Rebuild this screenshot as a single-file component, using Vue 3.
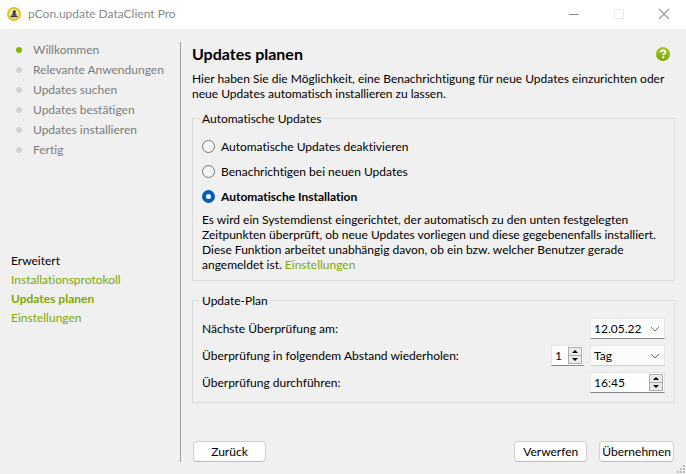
<script setup>
import { ref } from 'vue'

const steps = [
  'Willkommen',
  'Relevante Anwendungen',
  'Updates suchen',
  'Updates bestätigen',
  'Updates installieren',
  'Fertig',
]
const currentStep = 0

const links = ['Installationsprotokoll', 'Updates planen', 'Einstellungen']
const activeLink = 'Updates planen'

const modes = [
  { id: 'off', label: 'Automatische Updates deaktivieren' },
  { id: 'notify', label: 'Benachrichtigen bei neuen Updates' },
  { id: 'auto', label: 'Automatische Installation' },
]
const mode = ref('auto')

const date = ref('12.05.22')
const amount = ref(1)
const unit = ref('Tag')
const time = ref('16:45')

function changeAmount(delta) {
  amount.value = Math.max(1, Number(amount.value) + delta)
}

function changeTime(delta) {
  const [h, m] = time.value.split(':').map(Number)
  time.value = `${String((h + delta + 24) % 24).padStart(2, '0')}:${String(m).padStart(2, '0')}`
}
</script>

<template>
  <div class="window">
    <header class="titlebar">
      <svg class="logo" width="14" height="14" viewBox="0 0 14 14" aria-hidden="true">
        <circle cx="7" cy="7" r="7" fill="#e3c51f" />
        <circle cx="7" cy="7" r="4.9" fill="#ece7b4" />
        <path d="M6.2 3.4h2.6v2L8 6.6l1.6.9v1.2H4.3V7.6h1.9L5.6 6.2z" fill="#34373c" />
        <path d="M3.6 9.6h6.8" stroke="#34373c" stroke-width="1.2" />
      </svg>
      <span class="caption">pCon.update DataClient Pro</span>
      <div class="controls">
        <button type="button" aria-label="Minimieren">
          <svg width="12" height="12" viewBox="0 0 12 12"><path d="M1 6.5h10" stroke="#8c8c8c" /></svg>
        </button>
        <button type="button" aria-label="Maximieren" disabled>
          <svg width="12" height="12" viewBox="0 0 12 12"><rect x="1.5" y="1.5" width="9" height="9" rx="1" fill="none" stroke="#e6e6e6" /></svg>
        </button>
        <button type="button" aria-label="Schließen">
          <svg width="12" height="12" viewBox="0 0 12 12"><path d="M1 1l10 10M11 1L1 11" stroke="#999" stroke-width="1.1" /></svg>
        </button>
      </div>
    </header>

    <div class="body">
      <nav class="sidebar">
        <ol class="steps">
          <li v-for="(step, i) in steps" :key="step" :class="{ current: i === currentStep }">{{ step }}</li>
        </ol>
        <div class="extended">
          <span>Erweitert</span>
          <a v-for="link in links" :key="link" href="#" :class="{ active: link === activeLink }">{{ link }}</a>
        </div>
      </nav>

      <main class="content">
        <div class="heading">
          <h1>Updates planen</h1>
          <button type="button" class="help" aria-label="Hilfe">
            <svg width="14" height="14" viewBox="0 0 14 14">
              <defs>
                <linearGradient id="help-fill" x1="0" y1="0" x2="0" y2="1">
                  <stop offset="0" stop-color="#a5cc22" />
                  <stop offset="1" stop-color="#7aa500" />
                </linearGradient>
              </defs>
              <circle cx="7" cy="7" r="7" fill="url(#help-fill)" />
              <path d="M4.6 5.4C4.6 3.9 5.7 3.3 7 3.3s2.4.7 2.4 1.9c0 1.5-2.2 1.5-2.2 3.1" fill="none" stroke="#fff" stroke-width="1.8" />
              <rect x="6.2" y="9.4" width="2" height="2" fill="#fff" />
            </svg>
          </button>
        </div>
        <p class="intro">
          Hier haben Sie die Möglichkeit, eine Benachrichtigung für neue Updates einzurichten oder
          neue Updates automatisch installieren zu lassen.
        </p>

        <fieldset class="group">
          <legend>Automatische Updates</legend>
          <label v-for="m in modes" :key="m.id" class="mode" :class="{ chosen: mode === m.id }">
            <input v-model="mode" type="radio" name="mode" :value="m.id" />
            <span>{{ m.label }}</span>
          </label>
          <p class="note">
            Es wird ein Systemdienst eingerichtet, der automatisch zu den unten festgelegten
            Zeitpunkten überprüft, ob neue Updates vorliegen und diese gegebenenfalls installiert.
            Diese Funktion arbeitet unabhängig davon, ob ein bzw. welcher Benutzer gerade
            angemeldet ist. <a href="#">Einstellungen</a>
          </p>
        </fieldset>

        <fieldset class="group plan">
          <legend>Update-Plan</legend>
          <div class="row">
            <label for="date">Nächste Überprüfung am:</label>
            <div class="field wide">
              <input id="date" v-model="date" type="text" />
              <button type="button" class="drop" aria-label="Kalender öffnen">
                <svg width="10" height="6" viewBox="0 0 10 6"><path d="M1 1l4 4 4-4" fill="none" stroke="#666" /></svg>
              </button>
            </div>
          </div>
          <div class="row">
            <label for="amount">Überprüfung in folgendem Abstand wiederholen:</label>
            <div class="field narrow">
              <input id="amount" v-model="amount" type="text" />
              <span class="spin">
                <button type="button" aria-label="Mehr" @click="changeAmount(1)">
                  <svg width="6" height="3" viewBox="0 0 6 3"><path d="M0 3l3-3 3 3z" /></svg>
                </button>
                <button type="button" aria-label="Weniger" @click="changeAmount(-1)">
                  <svg width="6" height="3" viewBox="0 0 6 3"><path d="M0 0l3 3 3-3z" /></svg>
                </button>
              </span>
            </div>
            <div class="field wide combo">
              <select v-model="unit" aria-label="Einheit">
                <option>Tag</option>
                <option>Woche</option>
                <option>Monat</option>
              </select>
              <svg class="arrow" width="10" height="6" viewBox="0 0 10 6"><path d="M1 1l4 4 4-4" fill="none" stroke="#666" /></svg>
            </div>
          </div>
          <div class="row">
            <label for="time">Überprüfung durchführen:</label>
            <div class="field wide">
              <input id="time" v-model="time" type="text" />
              <span class="spin">
                <button type="button" aria-label="Später" @click="changeTime(1)">
                  <svg width="6" height="3" viewBox="0 0 6 3"><path d="M0 3l3-3 3 3z" /></svg>
                </button>
                <button type="button" aria-label="Früher" @click="changeTime(-1)">
                  <svg width="6" height="3" viewBox="0 0 6 3"><path d="M0 0l3 3 3-3z" /></svg>
                </button>
              </span>
            </div>
          </div>
        </fieldset>

        <footer class="actions">
          <button type="button">Zurück</button>
          <span class="spacer"></span>
          <button type="button">Verwerfen</button>
          <button type="button">Übernehmen</button>
        </footer>
      </main>
    </div>

    <svg class="grip" width="9" height="9" viewBox="0 0 9 9" aria-hidden="true">
      <path d="M6 0h2v2H6zM3 3h2v2H3zM6 3h2v2H6zM0 6h2v2H0zM3 6h2v2H3zM6 6h2v2H6z" fill="#bdbdbd" />
    </svg>
  </div>
</template>

<style>
body {
  margin: 0;
  background: #f0f0f0;
}
</style>

<style scoped>
.window {
  position: relative;
  display: flex;
  flex-direction: column;
  min-height: 100vh;
  box-sizing: border-box;
  background: #f0f0f0;
  color: #000;
  font: 12px/15px Lato, "Noto Sans", sans-serif;
  font-variant-ligatures: none;
}

button,
input,
select {
  font: inherit;
  color: inherit;
}

button {
  padding: 0;
  border: 0;
  background: none;
}

a {
  color: #7fa800;
  text-decoration: none;
}

.titlebar {
  display: flex;
  align-items: center;
  height: 29px;
  padding: 0 0 2px 7px;
  box-sizing: border-box;
  background: #fff;
  color: #8a8a8a;
}

.caption {
  flex: 1;
  margin-left: 7px;
}

.controls {
  display: flex;
}

.controls button {
  display: flex;
  align-items: center;
  justify-content: center;
  width: 45px;
  height: 27px;
}

.body {
  display: flex;
  flex: 1;
  padding: 13px 11px 12px;
}

.sidebar {
  flex: 0 0 169px;
  border-right: 1px solid #a0a0a0;
}

.steps {
  margin: -2px 0 0;
  padding: 0;
  list-style: none;
  line-height: 20px;
  color: #7c7c7c;
}

.steps li {
  display: flex;
  align-items: center;
  gap: 11px;
  padding-left: 5px;
  white-space: nowrap;
}

.steps li::before {
  content: "";
  width: 6px;
  height: 6px;
  border-radius: 50%;
  background: #d2d2d2;
}

.steps li.current::before {
  background: #86b300;
}

.extended {
  display: flex;
  flex-direction: column;
  margin-top: 91px;
  line-height: 19px;
}

.extended .active {
  font-weight: 700;
}

.content {
  display: flex;
  flex: 1;
  flex-direction: column;
  min-width: 0;
  padding-left: 11px;
}

.heading {
  display: flex;
  align-items: center;
  justify-content: space-between;
  height: 23px;
  padding-right: 5px;
}

h1 {
  margin: 0;
  font-size: 16px;
  line-height: 20px;
}

.help {
  display: flex;
}

.intro {
  margin: 6px 0 0;
}

.group {
  min-width: 0;
  margin: 10px 0 0;
  padding: 8px 9px;
  border: 1px solid #dcdcdc;
}

.group legend {
  margin-left: -2px;
  padding: 0 2px;
}

.mode {
  display: flex;
  align-items: center;
  gap: 6px;
  height: 25px;
}

.mode input {
  appearance: none;
  width: 13px;
  height: 13px;
  margin: 0;
  box-sizing: border-box;
  border: 1px solid #767676;
  border-radius: 50%;
  background: #f5f5f5;
}

.mode input:checked {
  border: 4px solid #005fb8;
  background: #fff;
}

.chosen {
  font-weight: 700;
}

.note {
  margin: 3px 0 0;
}

.plan {
  margin-top: 12px;
  padding-top: 7px;
  padding-bottom: 6px;
}

.row {
  display: flex;
  align-items: center;
  gap: 6px;
  height: 27px;
}

.row label {
  flex: 1;
}

.field {
  position: relative;
  display: flex;
  align-items: center;
  height: 21px;
  box-sizing: border-box;
  border: 1px solid #e5e5e5;
  border-bottom-color: #868686;
  background: #fff;
}

.wide {
  width: 75px;
}

.narrow {
  width: 33px;
}

.field input {
  flex: 1;
  width: 0;
  min-width: 0;
  height: 19px;
  padding: 0 0 0 3px;
  box-sizing: border-box;
  border: 0;
  background: none;
  outline: none;
}

.drop {
  display: flex;
  align-items: center;
  justify-content: center;
  width: 18px;
  height: 19px;
}

.combo {
  border-bottom-color: #d0d0d0;
  background: #fbfbfb;
}

.combo select {
  appearance: none;
  width: 100%;
  height: 19px;
  padding: 0 18px 0 3px;
  border: 0;
  background: none;
}

.arrow {
  position: absolute;
  right: 4px;
  pointer-events: none;
}

.spin {
  display: flex;
  flex-direction: column;
  width: 14px;
  margin-right: 1px;
}

.spin button {
  display: flex;
  align-items: center;
  justify-content: center;
  height: 9px;
  box-sizing: border-box;
  border: 1px solid #adadad;
  background: #ebebeb;
}

.spin button + button {
  height: 8px;
  border-top: 0;
}

.actions {
  display: flex;
  gap: 12px;
  margin-top: auto;
  padding: 0 1px;
}

.actions button {
  min-width: 73px;
  height: 21px;
  padding: 0 2px;
  box-sizing: border-box;
  border: 1px solid #d0d0d0;
  border-bottom-color: #bcbcbc;
  border-radius: 4px;
  background: #fdfdfd;
}

.spacer {
  flex: 1;
}

.grip {
  position: absolute;
  right: 0;
  bottom: 0;
}
</style>
